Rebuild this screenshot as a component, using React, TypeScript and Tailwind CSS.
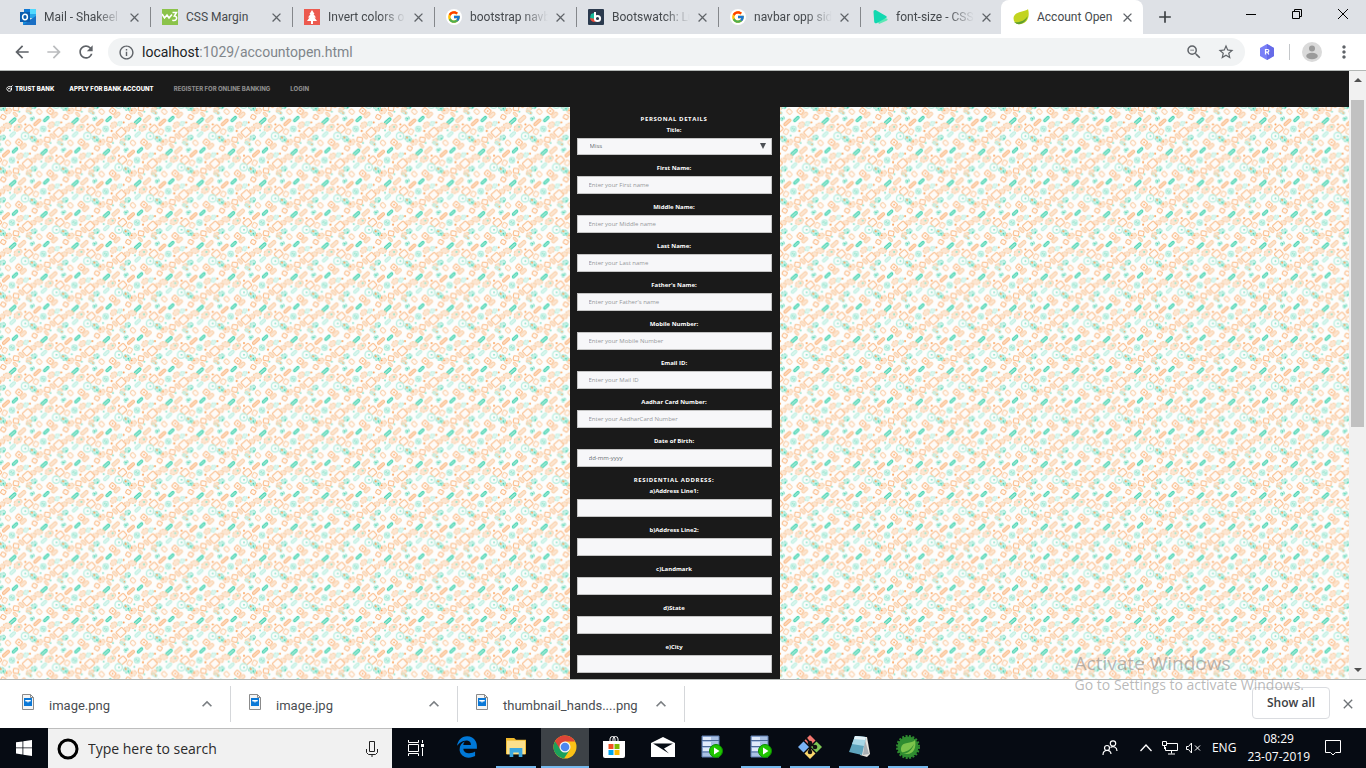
import React, { useId } from "react";
import { FcGoogle } from "react-icons/fc";
import { FaEdgeLegacy } from "react-icons/fa6";
import {
  MdAdd,
  MdArrowBack,
  MdArrowForward,
  MdClose,
  MdExpandLess,
  MdInfoOutline,
  MdMoreVert,
  MdRefresh,
  MdStarBorder,
  MdZoomOut,
} from "react-icons/md";

/* ---------- Favicons ---------- */

const OutlookIcon = () => (
  <svg viewBox="0 0 16 16" className="size-4 shrink-0">
    <rect x="4" y="0" width="12" height="9" fill="#28a8ea" />
    <rect x="4" y="0" width="6" height="4" fill="#0f78d4" />
    <rect x="10" y="0" width="6" height="5" fill="#50d9ff" />
    <path d="M3 7l6.5 4L16 7v9H3z" fill="#1490df" />
    <path d="M3 16l13-9v9z" fill="#1a6fc4" />
    <rect x="0" y="3" width="10" height="10" fill="#0a5cad" />
    <ellipse cx="5" cy="8" rx="2.4" ry="2.7" fill="none" stroke="#fff" strokeWidth="1.5" />
  </svg>
);

const W3Icon = () => (
  <svg viewBox="0 0 16 16" className="size-4 shrink-0">
    <rect width="16" height="16" fill="#8bc34a" />
    <path d="M0 5l2.500 4L5 6l2 3 3-3.500" fill="none" stroke="#fff" strokeWidth="1.6" />
    <path d="M10.500 3.500h4L12.300 7c4 .3 2.600 5.500-2 4.200" fill="none" stroke="#fff" strokeWidth="1.5" />
  </svg>
);

const TreeIcon = () => (
  <svg viewBox="0 0 16 16" className="size-4 shrink-0">
    <rect width="16" height="16" fill="#ec5a4f" />
    <path d="M8 1l2.500 4H9.500l2.500 3.500h-1.500L13 12H9v3H7v-3H3l2.500-3.500H4L6.500 5H5.500z" fill="#fff" />
  </svg>
);

const GoogleIcon = () => (
  <span className="flex size-4 shrink-0 items-center justify-center rounded-full bg-white">
    <FcGoogle size={14} />
  </span>
);

const BootswatchIcon = () => (
  <svg viewBox="0 0 16 16" className="size-4 shrink-0">
    <rect width="16" height="16" rx="1" fill="#2b3a4e" />
    <path d="M3 5a6 6 0 0 0 0 6l3 1V4z" fill="#18bc9c" />
    <path d="M2 9a5 5 0 0 0 5 4l1-3z" fill="#e74c3c" />
    <path d="M7 3v7.500" stroke="#fff" strokeWidth="2" />
    <circle cx="9.5" cy="9.5" r="2.6" fill="none" stroke="#fff" strokeWidth="2" />
  </svg>
);

const PlayIcon = () => (
  <svg viewBox="0 0 16 16" className="size-4 shrink-0">
    <path d="M4 9l11 .5c1 .5.6 1.500 0 2L7 15z" fill="#5ce8b4" />
    <path d="M1.500 3c0-1.500 1-2.500 2.500-1.800L14 7c1 .6 1 1.500 0 2L5 14c-1.500.8-2.800 0-2.800-1.500z" fill="#12d8b0" />
  </svg>
);

const LeafIcon = () => (
  <svg viewBox="0 0 16 16" className="size-4 shrink-0">
    <path d="M15 0c-2 3-14 2-14.500 9C.5 14 4 16 8 15c7-1.500 9-8 7-15z" fill="#c2d420" />
    <path d="M1 13c5 1 11-1 13.500-6C14 12 9 16 4 15z" fill="#5f9e31" />
  </svg>
);

/* ---------- Browser frame ---------- */

const tabs = [
  { title: "Mail - Shakeel", icon: <OutlookIcon /> },
  { title: "CSS Margin", icon: <W3Icon /> },
  { title: "Invert colors o", icon: <TreeIcon /> },
  { title: "bootstrap navb", icon: <GoogleIcon /> },
  { title: "Bootswatch: Lu", icon: <BootswatchIcon /> },
  { title: "navbar opp sid", icon: <GoogleIcon /> },
  { title: "font-size - CSS", icon: <PlayIcon /> },
  { title: "Account Open", icon: <LeafIcon />, active: true },
];

function TabStrip() {
  return (
    <header className="flex h-[34px] shrink-0 bg-[#dee1e6] pl-[9px] font-[Roboto,sans-serif]">
      <div className="flex min-w-0">
        {tabs.map((tab, i) => (
          <div
            key={i}
            className={
              tab.active
                ? "-ml-[2px] flex w-[142px] items-center rounded-t-lg bg-white pr-2 pl-3"
                : "flex w-[142px] items-center pl-[11px]"
            }
          >
            {tab.icon}
            <span
              className={
                tab.active || i === 1
                  ? "ml-2 min-w-0 flex-1 text-xs whitespace-nowrap text-[#45494d]"
                  : "ml-2 min-w-0 flex-1 text-xs whitespace-nowrap text-[#45494d] [mask-image:linear-gradient(to_right,black_calc(100%-26px),transparent)]"
              }
            >
              {tab.title}
            </span>
            <button aria-label="Close tab" className="ml-1 flex size-4 shrink-0 items-center justify-center text-[#5f6368]">
              <MdClose size={15} />
            </button>
            {!tab.active && <span className={i === 6 ? "ml-2 w-px" : "ml-2 h-5 w-px bg-[#84878b]"} />}
          </div>
        ))}
      </div>
      <button aria-label="New tab" className="ml-3 flex w-5 items-center justify-center text-[#3c4043]">
        <MdAdd size={20} />
      </button>
      <div className="ml-auto flex h-7 text-black">
        <button aria-label="Minimize" className="flex w-[46px] items-center justify-center">
          <svg viewBox="0 0 10 10" className="size-[10px]">
            <path d="M0 5.500h10" stroke="currentColor" />
          </svg>
        </button>
        <button aria-label="Restore" className="flex w-[46px] items-center justify-center">
          <svg viewBox="0 0 10 10" className="size-[10px]" fill="none" stroke="currentColor">
            <path d="M.5 2.500h7v7h-7zM2.500 2.500v-2h7v7h-2" />
          </svg>
        </button>
        <button aria-label="Close" className="flex w-[46px] items-center justify-center">
          <svg viewBox="0 0 10 10" className="size-[10px]" stroke="currentColor">
            <path d="M0 0l10 10M10 0L0 10" />
          </svg>
        </button>
      </div>
    </header>
  );
}

function Toolbar() {
  return (
    <div className="flex h-9 shrink-0 items-center bg-white px-3 font-[Roboto,sans-serif] text-[#5f6368]">
      <button aria-label="Back"><MdArrowBack size={20} /></button>
      <button aria-label="Forward" className="ml-3 text-[#babcbe]"><MdArrowForward size={20} /></button>
      <button aria-label="Reload" className="ml-3"><MdRefresh size={20} /></button>
      <div className="ml-3 flex h-7 flex-1 items-center rounded-full bg-[#f1f3f4] px-[10px]">
        <MdInfoOutline size={17} />
        <span className="ml-[7px] flex-1 text-sm text-[#80868b]">
          <span className="text-[#202124]">localhost</span>:1029/accountopen.html
        </span>
        <button aria-label="Zoom"><MdZoomOut size={18} /></button>
        <button aria-label="Bookmark" className="ml-[14px]"><MdStarBorder size={18} /></button>
      </div>
      <button aria-label="Extension" className="ml-[14px]">
        <svg viewBox="0 0 16 16" className="size-4">
          <path d="M8 0l7 4v8l-7 4-7-4V4z" fill="#7a80f7" />
          <path d="M8 0l7 4v8l-7 4z" fill="#666be8" />
          <path d="M6.500 10.500v-5h2a1.300 1.300 0 0 1 0 2.700h-2m2 0l1.300 2.300" fill="none" stroke="#fff" strokeWidth="1.2" />
        </svg>
      </button>
      <span className="ml-[14px] h-4 w-px bg-[#c4c7ca]" />
      <button aria-label="Profile" className="ml-3">
        <svg viewBox="0 0 20 20" className="size-5">
          <circle cx="10" cy="10" r="10" fill="#dadada" />
          <circle cx="10" cy="6.5" r="3" fill="#9b9b9b" />
          <ellipse cx="10" cy="14" rx="5.8" ry="3.2" fill="#9b9b9b" />
        </svg>
      </button>
      <button aria-label="Menu" className="ml-3"><MdMoreVert size={20} /></button>
    </div>
  );
}

/* ---------- Page background ---------- */

type Doodle = [kind: "pill" | "box" | "ring" | "blob" | "dot", x: number, y: number, w: number, h: number, angle: number, color: string];

const TEAL = "#3fd3ae";
const MINT = "#93e4cd";
const PALE = "#bcefe1";
const ORANGE = "#fbb984";
const AMBER = "#fba25a";
const PEACH = "#fbcfa8";

const doodles: Doodle[] = [
  ["pill", 38, 42, 24, 8, -42, TEAL],
  ["pill", 139, 36, 20, 7, -42, TEAL],
  ["pill", 66, 36, 26, 10, -42, PEACH],
  ["pill", 164, 24, 20, 10, -42, PEACH],
  ["blob", 97, 35, 7, 5, -40, MINT],
  ["dot", 97, 35, 3, 3, 0, TEAL],
  ["pill", 112, 46, 26, 8, -42, ORANGE],
  ["box", 10, 30, 14, 12, 30, ORANGE],
  ["blob", 22, 56, 12, 8, 0, PEACH],
  ["blob", 54, 62, 13, 9, -30, PEACH],
  ["dot", 57, 60, 4, 4, 0, MINT],
  ["box", 86, 66, 22, 18, -42, ORANGE],
  ["ring", 130, 66, 8, 8, 0, PALE],
  ["blob", 130, 66, 4, 4, 0, MINT],
  ["box", 108, 74, 13, 15, 30, PEACH],
  ["box", 176, 76, 24, 21, -42, ORANGE],
  ["blob", 154, 54, 11, 8, -42, PEACH],
  ["blob", 6, 66, 8, 7, 20, PEACH],
  ["ring", 75, 87, 11, 11, 0, PALE],
  ["dot", 76, 87, 4, 4, 0, MINT],
  ["blob", 100, 96, 11, 8, 30, MINT],
  ["dot", 96, 92, 4, 4, 0, AMBER],
  ["dot", 104, 99, 3, 3, 0, TEAL],
  ["blob", 8, 92, 9, 7, -30, MINT],
  ["dot", 12, 95, 3, 3, 0, TEAL],
  ["pill", 38, 82, 20, 8, -42, PALE],
  ["box", 57, 106, 17, 15, 40, ORANGE],
  ["dot", 57, 106, 3, 3, 0, AMBER],
  ["box", 142, 98, 16, 14, 10, ORANGE],
  ["pill", 158, 88, 18, 8, 45, PEACH],
  ["blob", 24, 12, 11, 8, -30, PEACH],
  ["dot", 20, 10, 3, 3, 0, AMBER],
  ["pill", 88, 16, 18, 8, 30, PALE],
  ["box", 118, 14, 15, 12, 45, PEACH],
  ["dot", 92, 18, 3, 3, 0, AMBER],
  ["dot", 30, 70, 4, 4, 0, MINT],
  ["dot", 148, 72, 4, 4, 0, AMBER],
  ["dot", 122, 86, 4, 4, 0, MINT],
  ["dot", 184, 46, 4, 4, 0, AMBER],
  ["blob", 172, 50, 8, 6, -42, PALE],
  ["dot", 58, 14, 4, 4, 0, MINT],
  ["pill", 46, 22, 16, 7, 45, PEACH],
  ["dot", 76, 52, 4, 4, 0, AMBER],
  ["blob", 180, 102, 9, 6, -42, PEACH],
];

const shifts = [
  [0, 0], [188, 0], [-188, 0], [0, -188], [0, 188], [188, -188], [-188, 188],
  [94, 94], [-94, 94], [94, -94], [-94, -94],
];

function DoodleShape({ d }: { d: Doodle }) {
  const [kind, x, y, w, h, angle, color] = d;
  const turn = `translate(${x} ${y}) rotate(${angle})`;
  if (kind === "pill" || kind === "box")
    return (
      <rect
        transform={turn}
        x={-w / 2}
        y={-h / 2}
        width={w}
        height={h}
        rx={kind === "pill" ? 4 : 3}
        fill={kind === "pill" ? color : "#fff7ef"}
        fillOpacity={0.5}
        stroke={color}
        strokeWidth={3}
      />
    );
  if (kind === "ring") return <circle cx={x} cy={y} r={w} fill="none" stroke={color} strokeWidth={4} />;
  if (kind === "blob")
    return <ellipse transform={turn} rx={w} ry={h} fill={color} fillOpacity={0.5} stroke={color} strokeWidth={3} strokeDasharray="7 3" />;
  return <circle cx={x} cy={y} r={w / 2 + 1} fill={color} />;
}

function Wallpaper() {
  const id = useId();
  return (
    <svg className="absolute inset-0 size-full" aria-hidden="true">
      <defs>
        <pattern id={id} width="188" height="188" patternUnits="userSpaceOnUse" patternTransform="scale(0.3325)">
          <rect width="188" height="188" fill="#fdfdfc" />
          {shifts.map(([dx, dy], i) => (
            <g key={i} transform={`translate(${dx} ${dy})`}>
              {doodles.map((d, j) => (
                <DoodleShape key={j} d={d} />
              ))}
            </g>
          ))}
        </pattern>
      </defs>
      <rect width="100%" height="100%" fill={`url(#${id})`} />
    </svg>
  );
}

/* ---------- Bank page ---------- */

function Navbar() {
  return (
    <nav className="flex h-9 shrink-0 items-center bg-[#1a1a1a] pb-[2px] pl-[6px] font-[Inter,sans-serif] text-[6px] font-extrabold text-white">
      <a href="#home" className="flex items-center gap-[2px]">
        <svg viewBox="0 0 14 14" className="size-[7px]" fill="none" stroke="#fff" strokeWidth="2">
          <path d="M1 7c2-4 6-5 9-3l3-3M2 8c0 5 7 6 9 2V5M4 8l3-2 2 3" />
        </svg>
        TRUST BANK
      </a>
      <a href="#apply" className="ml-[15px]">APPLY FOR BANK ACCOUNT</a>
      <a href="#register" className="ml-5 text-[#8a8a8a]">REGISTER FOR ONLINE BANKING</a>
      <a href="#login" className="ml-5 text-[#8a8a8a]">LOGIN</a>
    </nav>
  );
}

const personal = [
  ["First Name:", "Enter your First name"],
  ["Middle Name:", "Enter your Middle name"],
  ["Last Name:", "Enter your Last name"],
  ["Father's Name:", "Enter your Father's name"],
  ["Mobile Number:", "Enter your Mobile Number"],
  ["Email ID:", "Enter your Mail ID"],
  ["Aadhar Card Number:", "Enter your AadharCard Number"],
  ["Date of Birth:", "dd-mm-yyyy"],
];

const address = ["a)Address Line1:", "b)Address Line2:", "c)Landmark", "d)State", "e)City"];

function Field({ label, placeholder }: { label: string; placeholder?: string }) {
  const id = useId();
  return (
    <div className="mb-[7px] flex flex-col gap-[2px]">
      <label htmlFor={id} className="text-center leading-3 font-bold">{label}</label>
      <input
        id={id}
        type="text"
        placeholder={placeholder}
        className={
          placeholder === "dd-mm-yyyy"
            ? "h-[18px] border border-[#c4c4c4] bg-[#f7f7f9] px-[11px] text-[#55595c] placeholder:text-[#6b6f73]"
            : "h-[18px] border border-[#c4c4c4] bg-[#f7f7f9] px-[11px] text-[#55595c] placeholder:text-[#96989b]"
        }
      />
    </div>
  );
}

function AccountForm() {
  const id = useId();
  return (
    <form className="relative mx-auto w-[210px] bg-[#1a1a1a] pt-[6px] pr-2 pl-[7px] text-[6px] text-white">
      <h2 className="pt-[2px] text-center leading-[9px] font-bold tracking-widest">PERSONAL DETAILS</h2>
      <div className="mb-[7px] flex flex-col gap-[2px]">
        <label htmlFor={id} className="text-center leading-3 font-bold">Title:</label>
        <div className="relative flex">
          <select id={id} className="h-[17px] w-full appearance-none border border-[#c4c4c4] bg-[#f7f7f9] px-3 text-[#6b6f73]">
            <option>Miss</option>
            <option>Mr</option>
            <option>Mrs</option>
          </select>
          <svg viewBox="0 0 6 6" className="pointer-events-none absolute top-[5px] right-[6px] size-[6px]">
            <path d="M0 0h6L3 6z" fill="#4c5055" />
          </svg>
        </div>
      </div>
      {personal.map(([label, placeholder]) => (
        <Field key={label} label={label} placeholder={placeholder} />
      ))}
      <h2 className="pt-[2px] text-center leading-[9px] font-bold tracking-widest">RESIDENTIAL ADDRESS:</h2>
      {address.map((label) => (
        <Field key={label} label={label} />
      ))}
    </form>
  );
}

function Scrollbar() {
  return (
    <div className="flex w-[17px] shrink-0 flex-col items-center bg-[#f1f1f1] py-[7px]">
      <svg viewBox="0 0 8 4" className="h-1 w-2 shrink-0"><path d="M0 4h8L4 0z" fill="#505050" /></svg>
      <div className="mt-[18px] w-[13px] basis-[55%] bg-[#c1c1c1]" />
      <svg viewBox="0 0 8 4" className="mt-auto h-1 w-2 shrink-0"><path d="M0 0h8L4 4z" fill="#505050" /></svg>
    </div>
  );
}

function Viewport() {
  return (
    <main className="flex min-h-0 flex-1 border-y border-[#b3b7b5]">
      <div className="flex flex-1 flex-col overflow-hidden">
        <Navbar />
        <div className="relative flex min-h-0 flex-1">
          <Wallpaper />
          <AccountForm />
        </div>
      </div>
      <Scrollbar />
    </main>
  );
}

/* ---------- Downloads shelf ---------- */

function DownloadItem({ name }: { name: string }) {
  return (
    <div className="my-[6px] flex w-[227px] items-center border-r border-[#d5d7da] pl-[18px]">
      <svg viewBox="0 0 12 16" className="mb-1 h-4 w-3 shrink-0">
        <path d="M.5.5h8l3 3v12H.5z" fill="#f5f5f5" stroke="#8b8b8b" />
        <path d="M8.500.5v3h3" fill="none" stroke="#8b8b8b" />
        <rect x="2" y="4" width="8" height="8" fill="#0a78d7" />
        <path d="M3 6h6l-1 2-1-1-1 2-1-2-1 1z" fill="#fff" />
      </svg>
      <span className="ml-[15px] w-[136px] shrink-0 pt-1 text-[13px] whitespace-nowrap text-[#4a4e52]">{name}</span>
      <button aria-label={`Options for ${name}`} className="ml-3 text-[#7a7e82]"><MdExpandLess size={20} /></button>
    </div>
  );
}

function Downloads() {
  return (
    <footer className="flex h-12 shrink-0 bg-white pl-1 font-[Roboto,sans-serif]">
      <DownloadItem name="image.png" />
      <DownloadItem name="image.jpg" />
      <DownloadItem name="thumbnail_hands....png" />
      <button className="mt-[7px] ml-auto h-8 w-[78px] rounded border border-[#dadce0] font-['Open_Sans',sans-serif] text-xs font-semibold text-[#3c4043]">
        Show all
      </button>
      <button aria-label="Close downloads" className="mx-[10px] text-[#6f7377]"><MdClose size={16} /></button>
    </footer>
  );
}

/* ---------- Taskbar ---------- */

const TaskViewIcon = () => (
  <svg viewBox="0 0 16 16" className="size-4" fill="none" stroke="#fff">
    <path d="M.5 0v2.500h10V0M.5 16v-2.500h10V16M.5 4.500h10v7H.5zM14.500 0v3M14.500 8v8" />
    <path d="M13 4h3v3h-3z" fill="#fff" stroke="none" />
  </svg>
);

const FolderIcon = () => (
  <svg viewBox="0 0 24 22" className="h-5 w-6">
    <path d="M1 1h9l2 2h11v16H1z" fill="#f0b92d" />
    <path d="M2 4h20v15H2z" fill="#fbe08d" />
    <path d="M5 12h14v10h-4v-5H9v5H5z" fill="#3aa7e0" />
  </svg>
);

const ChromeIcon = () => (
  <svg viewBox="0 0 24 24" className="size-6">
    <circle cx="12" cy="12" r="11.5" fill="#fbc116" />
    <path d="M2 6.300A11.500 11.500 0 0 0 11 23.450L17 14.500 12 12z" fill="#1ba05b" />
    <path d="M2 6.300A11.500 11.500 0 0 1 22 6.500H12L7 14z" fill="#dd4437" />
    <circle cx="12" cy="12" r="5.5" fill="#f4f4f4" />
    <circle cx="12" cy="12" r="4.3" fill="#4b87ef" />
  </svg>
);

const StoreIcon = () => (
  <svg viewBox="0 0 24 24" className="size-6">
    <path d="M8 6V4a2.500 2.500 0 0 1 5 0v2M11 6V4a2.500 2.500 0 0 1 5 0v2" fill="none" stroke="#fff" />
    <path d="M1 6h22v15a2 2 0 0 1-2 2H3a2 2 0 0 1-2-2z" fill="#fff" />
    <path d="M6.500 9h5v5h-5z" fill="#f25022" />
    <path d="M12.500 9h5v5h-5z" fill="#7fba00" />
    <path d="M6.500 15h5v5h-5z" fill="#00a4ef" />
    <path d="M12.500 15h5v5h-5z" fill="#ffb900" />
  </svg>
);

const MailIcon = () => (
  <svg viewBox="0 0 24 22" className="h-[22px] w-6">
    <path d="M0 7l12-6 12 6v14H0z" fill="#fff" />
    <path d="M2 7.500h20l-9 5 5 5z" fill="#070d15" />
  </svg>
);

const ServerIcon = () => (
  <svg viewBox="0 0 22 24" className="h-6 w-[22px]">
    <path d="M1 1h17v21H1z" fill="#a9c1e4" stroke="#5f7fb0" />
    <path d="M1 5.500h17M1 11.500h17M1 17h17" stroke="#4d6b9a" />
    <path d="M2 2h8v3H2zM2 7h8v4H2zM2 13h8v3H2z" fill="#dfeafa" />
    <circle cx="15" cy="16" r="6.5" fill="#1fc600" stroke="#0d8a00" />
    <path d="M13 12.500l5.500 3.500-5.500 3.500z" fill="#fff" />
  </svg>
);

const GitIcon = () => (
  <svg viewBox="0 0 24 24" className="size-6">
    <path d="M12 0l5.500 5.500L12 11 6.500 5.500z" fill="#f3766f" />
    <path d="M18.500 6.500L24 12l-5.500 5.500L13 12z" fill="#7ec855" />
    <path d="M5.500 6.500L11 12l-5.500 5.500L0 12z" fill="#7ab3f5" />
    <path d="M12 13l5.500 5.500L12 24l-5.500-5.500z" fill="#fbd86c" />
    <path d="M8 3l4 5v9M12 8l5 4" fill="none" stroke="#111" strokeWidth="2" />
    <circle cx="12" cy="17" r="2.3" fill="#111" />
    <circle cx="17" cy="12" r="2.3" fill="#111" />
    <circle cx="12" cy="8" r="2.3" fill="#111" />
  </svg>
);

const NotepadIcon = () => (
  <svg viewBox="0 0 24 24" className="size-6">
    <path d="M18 2h2l3 17-3 3-7-2z" fill="#e9e6df" />
    <path d="M18 5l4 14-6 1z" fill="#a9b0b4" />
    <path d="M8 1l11 1-4 18-13-3z" fill="#5fa5bd" />
    <path d="M8 1l11 1-2 9-12-2z" fill="#a9d8e6" />
    <path d="M8 1l11 1-1 3-11-1z" fill="#e4f3f8" />
  </svg>
);

const SpringIcon = () => (
  <svg viewBox="0 0 24 24" className="size-6">
    <circle cx="12" cy="12" r="10.5" fill="#2f8c30" />
    <circle cx="12" cy="12" r="11" fill="none" stroke="#2f8c30" strokeWidth="2" strokeDasharray="2 1.5" />
    <path d="M19 5c-3 4-13 1-14 8-.5 4 2 6 6 6 7 0 9.500-6.500 8-14z" fill="#7cc34c" />
    <path d="M4 18c6-1 11-3 14-9-2 7-7 10-13 10z" fill="#2f8c30" />
  </svg>
);

const apps = [
  { name: "Edge", icon: <FaEdgeLegacy size={22} color="#0078d7" /> },
  { name: "File Explorer", icon: <FolderIcon />, open: true },
  { name: "Chrome", icon: <ChromeIcon />, current: true },
  { name: "Store", icon: <StoreIcon /> },
  { name: "Mail", icon: <MailIcon /> },
  { name: "Server monitor", icon: <ServerIcon /> },
  { name: "Server console", icon: <ServerIcon />, open: true },
  { name: "Git Bash", icon: <GitIcon />, open: true },
  { name: "Notepad", icon: <NotepadIcon />, open: true },
  { name: "Spring Tool Suite", icon: <SpringIcon />, open: true },
];

function Taskbar() {
  return (
    <footer className="flex h-10 shrink-0 bg-[#060b13] text-white">
      <button aria-label="Start" className="flex w-12 items-center justify-center">
        <svg viewBox="0 0 16 16" className="size-4" fill="#fff">
          <path d="M0 2.300L6.500 1.400v6.100H0zM7.300 1.300L16 0v7.500H7.300zM0 8.300h6.500v6.200L0 13.600zM7.300 8.300H16V16l-8.700-1.300z" />
        </svg>
      </button>
      <label className="flex w-[344px] items-center border-t border-[#bdbdbd] bg-[#f1f1f1] pr-[14px] pl-[9px] text-[#2b2b2b]">
        <svg viewBox="0 0 22 22" className="size-[22px] shrink-0">
          <circle cx="11" cy="11" r="9" fill="none" stroke="#000" strokeWidth="3" />
        </svg>
        <input
          type="text"
          aria-label="Search"
          placeholder="Type here to search"
          className="ml-[9px] min-w-0 flex-1 bg-transparent text-sm outline-none placeholder:text-[#2b2b2b]"
        />
        <svg viewBox="0 0 12 16" className="h-4 w-3 shrink-0" fill="none" stroke="#222">
          <path d="M3.500.5h5v10h-5zM.5 8v3.500l2 2h7l2-2V8M6 13.500V16" />
        </svg>
      </label>
      <button aria-label="Task view" className="flex w-12 items-center justify-center"><TaskViewIcon /></button>
      <div className="ml-[3px] flex gap-px">
        {apps.map((app) => (
          <button
            key={app.name}
            aria-label={app.name}
            className={app.current ? "flex w-12 flex-col items-center bg-[#3d4247]" : "flex w-12 flex-col items-center"}
          >
            <span className="flex flex-1 items-center">{app.icon}</span>
            <span className={app.current ? "h-0.5 w-full bg-[#76b9ed]" : app.open ? "h-0.5 w-10 bg-[#76b9ed]" : "h-0.5 w-10"} />
          </button>
        ))}
      </div>
      <div className="ml-auto flex items-center">
        <button aria-label="People">
          <svg viewBox="0 0 16 16" className="size-4" fill="none" stroke="#fff" strokeWidth="1.2">
            <circle cx="11" cy="3.5" r="2.7" />
            <circle cx="5" cy="8" r="2.5" />
            <path d="M1 15c0-6 8-6 8-1M8.500 7.500C11 5.500 15 7 15 11" />
          </svg>
        </button>
        <button aria-label="Hidden icons" className="ml-[22px]">
          <svg viewBox="0 0 12 8" className="h-2 w-3" fill="none" stroke="#fff" strokeWidth="1.3"><path d="M.5 7L6 1l5.500 6" /></svg>
        </button>
        <button aria-label="Network" className="ml-[10px]">
          <svg viewBox="0 0 16 14" className="h-[14px] w-4" fill="none" stroke="#fff">
            <path d="M5 2.500h10.500v7h-12V6M9.500 9.500v3M6 13h7M.5.5h4v4h-4zM2.500 4.500V8" />
          </svg>
        </button>
        <button aria-label="Muted" className="ml-2">
          <svg viewBox="0 0 15 12" className="h-3 w-[15px]" fill="none" stroke="#fff">
            <path d="M.5 4.500h2l3-3.500v10l-3-3.500h-2zM9 3.500l5 5M14 3.500l-5 5" />
          </svg>
        </button>
        <span className="ml-[11px] text-xs">ENG</span>
        <div className="ml-[11px] text-center text-xs leading-[18px]">
          <div>08:29</div>
          <div>23-07-2019</div>
        </div>
        <button aria-label="Notifications" className="mr-[25px] ml-[15px]">
          <svg viewBox="0 0 16 16" className="size-4" fill="none" stroke="#fff">
            <path d="M.5.5h15v12h-5L8 15l-2.500-2.500h-5z" />
          </svg>
        </button>
      </div>
    </footer>
  );
}

export default function App() {
  return (
    <div className="relative flex h-screen flex-col overflow-hidden bg-white font-['Open_Sans','Noto_Sans',sans-serif]">
      <TabStrip />
      <Toolbar />
      <Viewport />
      <Downloads />
      <Taskbar />
      <div className="pointer-events-none absolute right-[62px] bottom-[73px] text-[#8a8a8a]/60">
        <p className="text-[19px] leading-6">Activate Windows</p>
        <p className="text-sm leading-5">Go to Settings to activate Windows.</p>
      </div>
    </div>
  );
}
